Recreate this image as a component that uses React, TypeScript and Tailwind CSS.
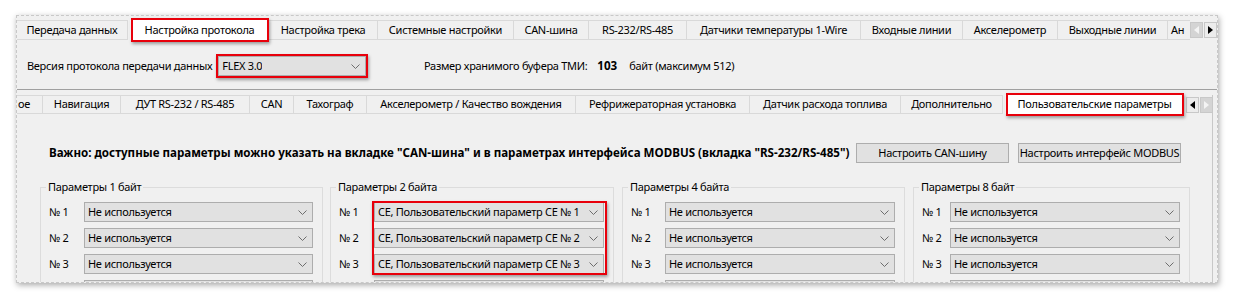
import React from "react";

interface TabDef {
  label: string;
  w: string;
  active?: boolean;
  partial?: "left" | "right";
}

const topTabs: TabDef[] = [
  { label: "Передача данных", w: "w-[111px]" },
  { label: "Настройка протокола", w: "w-[141px]", active: true },
  { label: "Настройка трека", w: "w-[109px]" },
  { label: "Системные настройки", w: "w-[136px]" },
  { label: "CAN-шина", w: "w-[75px]" },
  { label: "RS-232/RS-485", w: "w-[98px]" },
  { label: "Датчики температуры 1-Wire", w: "w-[174px]" },
  { label: "Входные линии", w: "w-[102px]" },
  { label: "Акселерометр", w: "w-[95px]" },
  { label: "Выходные линии", w: "w-[110px]" },
  { label: "Ан", w: "w-[22px]", partial: "right" },
];

const innerTabs: TabDef[] = [
  { label: "ое", w: "w-[26px]", partial: "left" },
  { label: "Навигация", w: "w-[78px]" },
  { label: "ДУТ RS-232 / RS-485", w: "w-[129px]" },
  { label: "CAN", w: "w-[44px]" },
  { label: "Тахограф", w: "w-[73px]" },
  { label: "Акселерометр / Качество вождения", w: "w-[209px]" },
  { label: "Рефрижераторная установка", w: "w-[174px]" },
  { label: "Датчик расхода топлива", w: "w-[151px]" },
  { label: "Дополнительно", w: "w-[102px]" },
  { label: "Пользовательские параметры", w: "w-[181px]", active: true },
];

function Chevron() {
  return (
    <svg width="9" height="5" viewBox="0 0 9 5" className="shrink-0">
      <polyline
        points="0.5,0.5 4.5,4.5 8.5,0.5"
        fill="none"
        stroke="#6d6d6d"
        strokeWidth="1"
      />
    </svg>
  );
}

function Select(props: { value: string; className?: string }) {
  return (
    <div
      className={`h-[20px] flex items-center justify-between border border-[#adadad] bg-[#e1e1e1] pl-[3px] pr-[5px] ${
        props.className ?? ""
      }`}
    >
      <span className="whitespace-nowrap overflow-hidden">{props.value}</span>
      <Chevron />
    </div>
  );
}

function ScrollArrows(props: { leftEnabled: boolean }) {
  const box = (dir: "l" | "r", enabled: boolean) => (
    <div
      className={`w-[13px] h-[16px] flex items-center justify-center border border-[#c8c8c8] ${
        enabled ? "bg-[#ececec]" : "bg-[#d4d4d4]"
      }`}
    >
      <svg width="5" height="8" viewBox="0 0 5 8">
        <polygon
          points={dir === "l" ? "5,0 0,4 5,8" : "0,0 5,4 0,8"}
          fill={enabled ? "#000" : "#f4f4f4"}
        />
      </svg>
    </div>
  );
  return (
    <div className="flex gap-[1px] items-center">
      {box("l", props.leftEnabled)}
      {box("r", !props.leftEnabled)}
    </div>
  );
}

function Tab(props: { tab: TabDef; height: string }) {
  const { tab } = props;
  if (tab.active) {
    return (
      <div className={`relative shrink-0 ${tab.w} ${props.height} pl-[2px]`}>
        <div className="h-full bg-white flex items-center justify-center whitespace-nowrap">
          {tab.label}
        </div>
        <div className="absolute left-[3px] right-0 top-[-2px] bottom-[-2px] border-2 border-[#e8000b] shadow-[1px_2px_3px_rgba(0,0,0,0.35)]" />
      </div>
    );
  }
  return (
    <div
      className={`shrink-0 ${tab.w} ${props.height} flex items-center overflow-hidden whitespace-nowrap border-t border-r border-b border-[#d9d9d9] bg-[#f0f0f0] ${
        tab.partial === "right"
          ? "justify-start pl-[3px] border-r-0"
          : tab.partial === "left"
          ? "justify-end pr-[12px]"
          : "justify-center"
      }`}
    >
      {tab.label}
    </div>
  );
}

function ParamGroup(props: {
  title: string;
  width: string;
  labelW: string;
  values: string[];
  highlighted?: boolean;
}) {
  const rows = props.values.map((v, i) => (
    <div key={i} className="flex items-center h-[20px] min-w-0">
      <span className={`${props.labelW} shrink-0`}>№ {i + 1}</span>
      <Select value={v} className="flex-1 min-w-0" />
    </div>
  ));
  return (
    <fieldset
      className={`${props.width} min-w-0 shrink-0 border border-[#dcdcdc] pl-[8px] pr-[9px] pt-[7px]`}
    >
      <legend className="-ml-[3px] px-[2px] leading-[16px]">{props.title}</legend>
      {props.highlighted ? (
        <div className="relative flex flex-col gap-[6px]">
          {rows}
          <div className="absolute left-[33px] right-[-3px] top-[-1px] bottom-[-1px] border-2 border-[#e8000b] shadow-[1px_2px_3px_rgba(0,0,0,0.35)]" />
        </div>
      ) : (
        <div className="flex flex-col gap-[6px]">{rows}</div>
      )}
      {/* next row, cut off by the torn edge */}
      <div className="flex mt-[6px]">
        <span className={`${props.labelW} shrink-0`} />
        <div className="flex-1 h-[20px] border border-[#adadad] bg-[#e1e1e1]" />
      </div>
    </fieldset>
  );
}

export default function App() {
  const unused = "Не используется";
  const ce = (n: number) => `CE, Пользовательский параметр CE № ${n}`;

  return (
    <div className="w-[1233px] h-[300px] bg-white overflow-hidden font-['Noto_Sans',sans-serif] text-[11px] tracking-[-0.3px] text-black pt-[15px] pl-[16px]">
      <div className="w-[1202px] h-[268px] bg-[#f0f0f0] overflow-hidden border border-dashed border-[#c8c8c8] shadow-[1px_2px_6px_rgba(0,0,0,0.35)] pt-[4px]">
        {/* top tab strip */}
        <div className="flex items-center h-[20px] pr-[2px]">
          {topTabs.map((t) => (
            <Tab key={t.label} tab={t} height="h-[20px]" />
          ))}
          <ScrollArrows leftEnabled={false} />
        </div>

        {/* protocol settings */}
        <div className="h-[50px] pt-[16px] border-b border-[#a0a0a0]">
          <div className="flex items-center h-[20px] pl-[10px]">
            <div className="w-[397px] flex items-center gap-[6px]">
              <span className="whitespace-nowrap">
                Версия протокола передачи данных
              </span>
              <div className="relative">
                <Select value="FLEX 3.0" className="w-[148px]" />
                <div className="absolute -inset-[2px] border-2 border-[#e8000b] shadow-[1px_2px_3px_rgba(0,0,0,0.35)]" />
              </div>
            </div>
            <span className="whitespace-nowrap">Размер хранимого буфера ТМИ:</span>
            <b className="ml-[10px] text-[11.6px] tracking-normal">103</b>
            <span className="ml-[12px] whitespace-nowrap">байт (максимум 512)</span>
          </div>
        </div>

        {/* inner tab widget */}
        <div className="mt-[5px] mr-[4px] border-r border-[#c8c8c8]">
          <div className="flex items-center h-[19px] pr-[2px]">
            {innerTabs.map((t) => (
              <Tab key={t.label} tab={t} height="h-[19px]" />
            ))}
            <div className="ml-[2px]">
              <ScrollArrows leftEnabled={true} />
            </div>
          </div>

          <div className="pt-[29px]">
            <div className="flex items-center justify-between pl-[32px] pr-[31px] h-[20px]">
              <b className="whitespace-nowrap text-[11.6px] tracking-normal">
                Важно: доступные параметры можно указать на вкладке "CAN-шина" и в
                параметрах интерфейса MODBUS (вкладка "RS-232/RS-485")
              </b>
              <div className="flex gap-[9px]">
                <button className="w-[153px] h-[20px] bg-[#e1e1e1] border border-[#adadad] whitespace-nowrap">
                  Настроить CAN-шину
                </button>
                <button className="w-[163px] h-[20px] bg-[#e1e1e1] border border-[#adadad] whitespace-nowrap">
                  Настроить интерфейс MODBUS
                </button>
              </div>
            </div>

            <div className="flex pl-[23px] mt-[16px]">
              <ParamGroup
                title="Параметры 1 байт"
                width="w-[283px]"
                labelW="w-[35px]"
                values={[unused, unused, unused]}
              />
              <div className="ml-[7px]">
                <ParamGroup
                  title="Параметры 2 байта"
                  width="w-[284px]"
                  labelW="w-[35px]"
                  values={[ce(1), ce(2), ce(3)]}
                  highlighted
                />
              </div>
              <div className="ml-[8px]">
                <ParamGroup
                  title="Параметры 4 байта"
                  width="w-[283px]"
                  labelW="w-[34px]"
                  values={[unused, unused, unused]}
                />
              </div>
              <div className="ml-[8px]">
                <ParamGroup
                  title="Параметры 8 байт"
                  width="w-[277px]"
                  labelW="w-[28px]"
                  values={[unused, unused, unused]}
                />
              </div>
            </div>
          </div>
        </div>
      </div>
    </div>
  );
}
